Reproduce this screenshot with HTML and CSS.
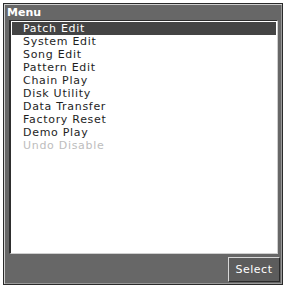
FILE: index.html
```html
<!DOCTYPE html>
<html>
<head>
<meta charset="utf-8">
<link rel="stylesheet" href="styles.css">
</head>
<body>
<div class="window">
  <div class="title">Menu</div>
  <div class="list">
    <div class="item selected">Patch Edit</div>
    <div class="item">System Edit</div>
    <div class="item">Song Edit</div>
    <div class="item">Pattern Edit</div>
    <div class="item">Chain Play</div>
    <div class="item">Disk Utility</div>
    <div class="item">Data Transfer</div>
    <div class="item">Factory Reset</div>
    <div class="item">Demo Play</div>
    <div class="item disabled">Undo Disable</div>
  </div>
  <div class="footer">
    <div class="button">Select</div>
  </div>
</div>
</body>
</html>
```
FILE: styles.css
```css
html, body {
  margin: 0;
  padding: 0;
  background: #ffffff;
}
body {
  padding: 3px 2px 2px 3px;
  font-family: "DejaVu Sans", sans-serif;
}
.window {
  height: 282px;
  box-sizing: border-box;
  border: 1px solid #2a2a2a;
  box-shadow: inset 1px 1px 0 #cfcfcf, inset -1px -1px 0 #9a9a9a;
  background: #676767;
  display: flex;
  flex-direction: column;
}
.title {
  height: 15px;
  padding: 1px 0 0 3px;
  color: #ffffff;
  font-family: "DejaVu Sans", sans-serif;
  font-weight: bold;
  font-size: 11px;
  line-height: 15px;
}
.list {
  flex: 1;
  margin: 0 4px 0 5px;
  background: #ffffff;
  border-top: 1px solid #2e2e2e;
  border-left: 2px solid #2e2e2e;
  border-right: 1px solid #cfcfcf;
  border-bottom: 1px solid #cfcfcf;
  padding: 1px 1px 0 1px;
}
.item {
  height: 13px;
  line-height: 13px;
  font-size: 11px;
  letter-spacing: 0.7px;
  color: #1e1e1e;
  padding-left: 11px;
}
.item.selected {
  background: #444444;
  color: #ffffff;
}
.item.disabled {
  color: #bdbdbd;
}
.footer {
  height: 30px;
  display: flex;
  justify-content: flex-end;
  align-items: center;
  padding-right: 2px;
}
.button {
  width: 52px;
  height: 25px;
  box-sizing: border-box;
  border-top: 1px solid #d8d8d8;
  border-left: 1px solid #d8d8d8;
  border-right: 1px solid #2a2a2a;
  border-bottom: 1px solid #2a2a2a;
  background: #5c5c5c;
  color: #ffffff;
  font-size: 11px;
  letter-spacing: 0.5px;
  line-height: 23px;
  text-align: center;
}
```
